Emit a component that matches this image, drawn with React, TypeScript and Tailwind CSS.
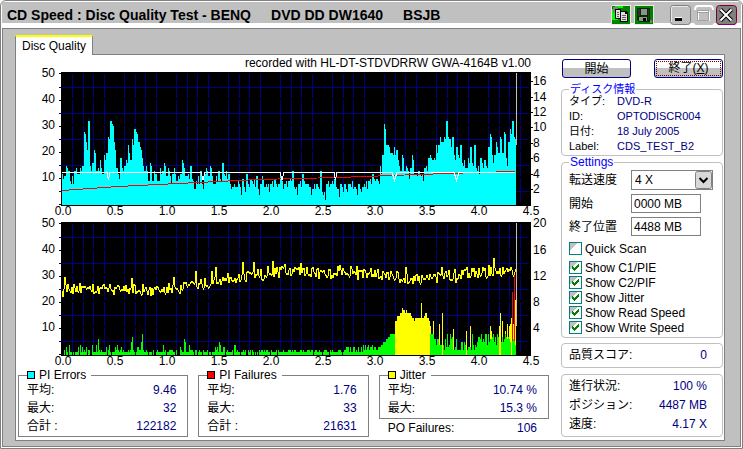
import { useId, useState, type ReactNode } from "react";

const PIE = [
  12, 11, 15, 13, 9, 11, 13, 14, 12, 14, 15, 28, 24, 32, 15, 16, 21, 13, 14, 17,
  12, 19, 20, 26, 32, 31, 24, 14, 12, 18, 14, 15, 17, 23, 17, 25, 29, 28, 24, 22,
  18, 13, 15, 9, 16, 9, 13, 12, 9, 14, 13, 16, 11, 14, 11, 12, 14, 9, 11, 12, 17,
  14, 11, 12, 15, 10, 6, 9, 11, 13, 8, 12, 14, 11, 15, 11, 8, 11, 13, 10, 16, 12,
  13, 12, 8, 7, 8, 7, 9, 7, 10, 7, 12, 8, 10, 9, 10, 11, 6, 8, 11, 7, 8, 8, 8, 9,
  10, 8, 8, 11, 9, 8, 9, 9, 10, 13, 7, 7, 8, 9, 12, 9, 8, 8, 7, 6, 8, 8, 7, 13, 5,
  5, 8, 9, 8, 9, 10, 7, 6, 8, 7, 8, 6, 8, 8, 9, 7, 6, 8, 6, 7, 8, 9, 9, 10, 12, 10,
  10, 9, 15, 19, 31, 23, 23, 20, 20, 22, 21, 17, 13, 19, 13, 15, 13, 14, 19, 12,
  12, 13, 12, 12, 14, 15, 18, 19, 17, 18, 23, 23, 26, 24, 26, 32, 26, 25, 26, 19,
  22, 19, 23, 16, 17, 14, 18, 22, 16, 23, 14, 15, 18, 16, 17, 15, 22, 27, 19, 19,
  24, 20, 26, 20, 28, 18, 24, 29, 32, 26,
];

const PIF_SPIKES: Record<number, number> = {
  36: 6, 69: 5, 70: 7, 79: 5, 80: 8, 122: 6, 123: 5, 157: 5,
};

// x, level
const JITTER_LEVELS = [
  [0, 25], [90, 24.5], [115, 25], [135, 27], [160, 28], [190, 30], [228, 32],
  [265, 30.5], [280, 32], [310, 30.5], [345, 29], [360, 29], [400, 31], [454, 31.5],
];

const BLOCK_START = 333;
const YELLOW_BLOCK = [
  13, 13, 15, 15, 15, 16, 16, 18, 17, 17, 16, 17, 16, 16, 16, 16, 15, 14, 14, 13,
  14, 14, 14, 14, 14, 14, 20, 14, 14, 15, 16, 16, 14, 14, 13,
];

const YELLOW_SPIKES: Record<number, number> = {
  368: 11, 371: 13, 377: 12, 380: 16, 391: 10, 404: 9, 408: 11, 428: 11, 429: 9,
  437: 11, 438: 16, 440: 13, 443: 9, 445: 12, 447: 11, 448: 12, 449: 14, 450: 12,
  451: 12, 453: 21,
};

// spikes that reach down to the axis
const FULL_SPIKES = [380, 404, 437, 438, 449];

function createRandom(seed: number) {
  let s = seed;
  return () => {
    s = (s * 16807) % 2147483647;
    return s / 2147483647;
  };
}

function interpolate(points: number[][], x: number) {
  for (let i = 1; i < points.length; i++) {
    if (x <= points[i][0]) {
      const [x0, y0] = points[i - 1];
      const [x1, y1] = points[i];
      return y0 + ((y1 - y0) * (x - x0)) / (x1 - x0);
    }
  }
  return points[points.length - 1][1];
}

const LEFT = 44;
const BOTTOM = 134;
const END = 454;

function bar(x: number, value: number) {
  const h = Math.round(value * 2.62);
  return `M${LEFT + x} ${BOTTOM + 1}v${-h}h1v${h}z`;
}

function buildPie() {
  const drops = [0, 2, 1, 0, 3, 1, 0];
  let d = "";
  for (let x = 0; x < END; x++) {
    const v = PIE[Math.min(x >> 1, PIE.length - 1)];
    d += bar(x, x % 2 ? v - drops[x % 7] : v);
  }
  return d;
}

function buildPif() {
  const rnd = createRandom(1171);
  let green = "";
  let yellow = "";
  for (let x = 0; x < END; x++) {
    const r = rnd();
    let v = r < 0.15 ? 0 : r < 0.62 ? 1 : r < 0.86 ? 2 : r < 0.93 ? 3 : 4;
    if (x > 175 && x < 280) v = Math.min(v, 2);
    if (x > 280) v = 1 + Math.floor(r * 3);
    if (x > 300) v = 2 + Math.floor(r * 3);
    if (x > 316) v = 3 + Math.floor((x - 316) / 2.5);
    if (x > 327) v = 8;
    if (x > 371) v = 4 + Math.floor(r * 3);
    if (x > 380) v = 2 + Math.floor(r * r * 7);
    if (x > 415) v = 4 + Math.floor(r * 5);

    const inBlock = x >= BLOCK_START && x < BLOCK_START + YELLOW_BLOCK.length;
    if (inBlock) {
      yellow += bar(x, YELLOW_BLOCK[x - BLOCK_START]);
    } else if (!FULL_SPIKES.includes(x)) {
      green += bar(x, PIF_SPIKES[x] ?? v);
    }
    if (YELLOW_SPIKES[x]) yellow += bar(x, YELLOW_SPIKES[x]);
  }
  return { green, yellow };
}

function buildJitter() {
  const rnd = createRandom(533);
  let d = "";
  let last = BOTTOM - 24 * 2.62;
  for (let x = 0; x < END; x++) {
    const r = rnd();
    let v = interpolate(JITTER_LEVELS, x) + (rnd() - 0.5) * 4.6;
    if (r > 0.95) v += 3.5;
    if (r < 0.05) v -= 1.5;
    const y = Math.round(BOTTOM - v * 2.62);
    const top = Math.round(Math.min(y, last));
    const h = Math.max(2, Math.round(Math.abs(y - last)));
    d += `M${LEFT + x} ${top}h1v${h}h-1z`;
    last = y;
  }
  return d;
}

const pieBars = buildPie();
const pifBars = buildPif();
const jitterLine = buildJitter();

function Plot(props: {
  label: string;
  rightLabels: [string, number][];
  rightTicks?: boolean;
  children: ReactNode;
}) {
  const { label, rightLabels, rightTicks, children } = props;
  const tenths = Array.from(Array(46).keys()).filter((n) => n % 5 !== 0);

  return (
    <svg
      viewBox="0 0 531 148"
      role="img"
      aria-label={label}
      className="block w-full overflow-visible font-['Liberation_Sans',sans-serif] text-[12px]"
    >
      <rect x="43" y="2" width="470" height="134" fill="#000" />
      <g stroke="#000080" shapeRendering="crispEdges">
        {tenths.map((n) => (
          <path
            key={n}
            d={`M${LEFT + Math.round(n * 10.4) + 0.5} 4V${BOTTOM}`}
            strokeDasharray="24 2"
          />
        ))}
        {[17, 43, 69, 95, 121].map((y) => (
          <path key={y} d={`M41 ${y + 0.5}H511`} />
        ))}
      </g>
      <g shapeRendering="crispEdges">{children}</g>
      <g stroke="#000" shapeRendering="crispEdges">
        {[3, 30, 56, 82, 108, 134].map((y) => (
          <path key={y} d={`M41 ${y + 0.5}H43`} />
        ))}
        {rightTicks &&
          rightLabels.map(([text, y]) => (
            <path key={text} d={`M513 ${y + 0.5}H515`} />
          ))}
      </g>
      {[50, 40, 30, 20, 10].map((n, i) => (
        <text key={n} x="37" y={7 + i * 26} textAnchor="end">
          {n}
        </text>
      ))}
      {Array.from(Array(10).keys()).map((n) => (
        <text key={n} x={45 + n * 52} y="145" textAnchor="middle">
          {(n / 2).toFixed(1)}
        </text>
      ))}
      {rightLabels.map(([text, y]) => (
        <text key={text} x="515" y={y + 4}>
          {text}
        </text>
      ))}
    </svg>
  );
}

function StatBox(props: {
  title: string;
  swatch: string;
  rows: [string, string][];
}) {
  return (
    <fieldset className="min-w-0 border border-[#808080] pr-[11px] pb-px pl-[8px]">
      <legend className="flex items-center gap-[4px] pr-[5px] leading-[12px]">
        <span className={`size-[8px] border border-black ${props.swatch}`} />
        {props.title}
      </legend>
      <dl>
        {props.rows.map(([name, value]) => (
          <div key={name} className="flex justify-between leading-[18px]">
            <dt>{name}</dt>
            <dd className="text-[#000080]">{value}</dd>
          </div>
        ))}
      </dl>
    </fieldset>
  );
}

function Check(props: { label: string; initial?: boolean }) {
  const [checked, setChecked] = useState(!!props.initial);

  return (
    <label className="flex h-[15px] items-center gap-[3px]">
      <span className="relative size-[13px]">
        <input
          type="checkbox"
          checked={checked}
          onChange={(e) => setChecked(e.target.checked)}
          className="block size-[13px] appearance-none border border-[#008080] bg-[linear-gradient(135deg,#c0c0c0_35%,#fff_35%)]"
        />
        {checked && (
          <svg
            viewBox="0 0 13 13"
            className="pointer-events-none absolute inset-0"
            shapeRendering="crispEdges"
          >
            <path
              d="M3 5h1v1h1v1h1V6h1V5h1V4h1V3h1v3H9v1H8v1H7v1H6v1H5V9H4V8H3z"
              fill="#008000"
            />
          </svg>
        )}
      </span>
      {props.label}
    </label>
  );
}

function ReadoutRows(props: { rows: [string, string][] }) {
  return (
    <dl>
      {props.rows.map(([name, value]) => (
        <div key={name} className="flex justify-between leading-[19px]">
          <dt>{name}</dt>
          <dd className="text-[#000080]">{value}</dd>
        </div>
      ))}
    </dl>
  );
}

function TitleBar() {
  return (
    <header className="flex h-[26px] items-start justify-between border-b-[5px] border-white bg-[#c0c0c0] pr-[4px] pl-[5px]">
      <h1 className="flex gap-[20px] text-[14px] leading-[26px] font-bold whitespace-nowrap">
        <span>CD Speed : Disc Quality Test - BENQ</span>
        <span>DVD DD DW1640</span>
        <span>BSJB</span>
      </h1>
      <div className="flex pt-[3px]">
        <button aria-label="Copy" className="mr-[3px] size-[20px]">
          <svg viewBox="0 0 20 20" shapeRendering="crispEdges">
            <rect width="20" height="20" rx="2" fill="#e8e8e8" />
            <path d="M1 1h18v18H1z" fill="#008000" />
            <path d="M1 4l3-3h8v2H4v9h3v3H1z" fill="#00ff00" />
            <path d="M2 2h5v2H4v4H2z" fill="#808080" />
            <path d="M4 4h6v10H4z" fill="#000" />
            <path d="M5 5h4v8H5z" fill="#e0e0e0" />
            <path d="M9 6h6l2 2v9H9z" fill="#000" />
            <path d="M10 7h4v2h2v7h-6z" fill="#e0e0e0" />
            <path d="M6 7.500h2M6 9.500h2M6 11.500h2M11 10.500h4M11 12.500h4M11 14.500h4" stroke="#606060" />
          </svg>
        </button>
        <button aria-label="Save" className="mr-[16px] size-[20px]">
          <svg viewBox="0 0 20 20" shapeRendering="crispEdges">
            <rect width="20" height="20" rx="2" fill="#e8e8e8" />
            <path d="M1 1h18v18H1z" fill="#008000" />
            <path d="M3 3h13v14H5l-2-2z" fill="#003000" />
            <path d="M4 4h2v7H4zM14 4h1v11h-1z" fill="#303030" />
            <path d="M7 4h6v6H7z" fill="#909090" />
            <path d="M5 12h8v4H5z" fill="#909090" />
            <path d="M9 13h3v3H9z" fill="#000" />
            <path d="M16 15h2v3h-2z" fill="#808080" />
          </svg>
        </button>
        <button aria-label="Minimize" className="mr-[3px] size-[21px]">
          <svg viewBox="0 0 21 21">
            <rect x=".5" y=".5" width="20" height="19" rx="3" fill="#c0c0c0" stroke="#808080" />
            <path d="M1.500 17V3q0-1.500 1.500-1.500h15" fill="none" stroke="#e8e8e8" />
            <path d="M5 12.500h7" stroke="#fff" />
            <path d="M5 14.500h7" stroke="#000" strokeWidth="3" />
          </svg>
        </button>
        <button aria-label="Maximize" disabled className="mr-[2px] size-[20px]">
          <svg viewBox="0 0 20 20">
            <rect width="20" height="20" rx="3" fill="#c0c0c0" />
            <path d="M1 5q0-4 3-4h12q3 0 3 4" fill="none" stroke="#fff" strokeWidth="2" />
            <path d="M4.500 6.500h11v9h-11z" fill="none" stroke="#fff" />
            <path d="M3.500 5.500h11v10h-11zM3.500 7.500h11" fill="none" stroke="#a0a0a0" />
          </svg>
        </button>
        <button aria-label="Close" className="size-[21px]">
          <svg viewBox="0 0 21 21">
            <rect x=".5" y=".5" width="20" height="19" rx="3" fill="#808080" stroke="#800020" />
            <path d="M2 19.500h17" stroke="#800080" />
            <path d="M4.500 4.500l11 11M15.500 4.500l-11 11" stroke="#000" strokeWidth="4" />
            <path d="M4.500 4.500l11 11M15.500 4.500l-11 11" stroke="#fff" strokeWidth="2" />
          </svg>
        </button>
      </div>
    </header>
  );
}

const group = "min-w-0 rounded-[4px] border border-[#c0c0c0] pl-[7px]";
const pushButton =
  "h-[19px] w-[69px] rounded-[3px] border border-[#000080] bg-[linear-gradient(#fff_50%,#c0c0c0_50%)] leading-[16px]";

function SidePanel() {
  const [speed, setSpeed] = useState("4 X");
  const [start, setStart] = useState("0000 MB");
  const [end, setEnd] = useState("4488 MB");
  const id = useId();

  return (
    <aside className="flex w-[162px] shrink-0 flex-col pt-[4px]">
      <div className="flex justify-between pl-px">
        <button className={pushButton}>開始</button>
        <button className={`${pushButton} p-px`}>
          <span className="block h-full border border-dotted border-[#800000] leading-[13px]">
            終了(<u>X</u>)
          </span>
        </button>
      </div>

      <fieldset className={`${group} mt-[6px] pb-px`}>
        <legend className="h-[10px] px-px text-[11px] leading-[10px] text-[#0000ff]">
          ディスク情報
        </legend>
        <dl className="text-[11px] leading-[15px]">
          {[
            ["タイプ:", "DVD-R"],
            ["ID:", "OPTODISCR004"],
            ["日付:", "18 July 2005"],
            ["Label:", "CDS_TEST_B2"],
          ].map(([name, value]) => (
            <div key={name} className="flex">
              <dt className="w-[48px]">{name}</dt>
              <dd className="text-[#000080]">{value}</dd>
            </div>
          ))}
        </dl>
      </fieldset>

      <fieldset className={`${group} mt-px pt-[3px] pb-[2px]`}>
        <legend className="h-[10px] px-px leading-[10px] text-[#0000ff]">
          Settings
        </legend>
        <div className="grid grid-cols-[62px_1fr] items-center gap-y-[4px]">
          <label htmlFor={`${id}-speed`}>転送速度</label>
          <span className="relative w-[82px]">
            <select
              id={`${id}-speed`}
              value={speed}
              onChange={(e) => setSpeed(e.target.value)}
              className="block h-[20px] w-full appearance-none border border-[#808080] bg-white pl-[3px]"
            >
              <option>4 X</option>
              <option>8 X</option>
            </select>
            <svg
              viewBox="0 0 17 18"
              className="pointer-events-none absolute top-px right-px h-[18px] w-[17px]"
            >
              <rect x=".5" y=".5" width="16" height="17" rx="2" fill="#d8d8d8" stroke="#808080" />
              <path d="M4.500 7l4 4 4-4" fill="none" stroke="#000" strokeWidth="2" />
            </svg>
          </span>
          <label htmlFor={`${id}-start`}>開始</label>
          <input
            id={`${id}-start`}
            value={start}
            onChange={(e) => setStart(e.target.value)}
            className="h-[19px] w-[70px] border border-[#808080] pl-[2px]"
          />
          <label htmlFor={`${id}-end`}>終了位置</label>
          <input
            id={`${id}-end`}
            value={end}
            onChange={(e) => setEnd(e.target.value)}
            className="h-[19px] w-[70px] border border-[#808080] pl-[2px]"
          />
        </div>
        <div className="pt-[5px]">
          <Check label="Quick Scan" />
          <div className="mt-[4px]">
            <Check label="Show C1/PIE" initial />
            <Check label="Show C2/PIF" initial />
            <Check label="Show Jitter" initial />
            <Check label="Show Read Speed" initial />
            <Check label="Show Write Speed" initial />
          </div>
        </div>
      </fieldset>

      <section className={`${group} mt-[5px] py-[2px] pr-[15px]`}>
        <ReadoutRows rows={[["品質スコア:", "0"]]} />
      </section>
      <section className={`${group} mt-[6px] py-[2px] pr-[15px]`}>
        <ReadoutRows
          rows={[
            ["進行状況:", "100 %"],
            ["ポジション:", "4487 MB"],
            ["速度:", "4.17 X"],
          ]}
        />
      </section>
    </aside>
  );
}

export default function App() {
  return (
    <div className="flex min-h-screen flex-col rounded-t-[6px] border border-[#808080] bg-white p-px font-['Liberation_Sans','Noto_Sans_CJK_JP',sans-serif] text-[12px] text-black">
      <TitleBar />
      <main className="flex grow flex-col border border-[#808080] bg-[#c0c0c0] pt-[6px] pr-[15px] pb-[5px] pl-[12px]">
        <div role="tablist" className="flex">
          <button
            role="tab"
            aria-selected="true"
            className="relative z-10 -mb-px h-[20px] w-[78px] border-x border-t-2 border-x-[#808080] border-t-[#ffff00] bg-white text-[12px] leading-[17px] whitespace-nowrap"
          >
            Disc Quality
          </button>
        </div>
        <div className="flex grow gap-[12px] border border-[#808080] bg-white pr-px pb-[2px] pl-[2px]">
          <div className="min-w-0 grow">
            <p className="pt-px pr-[18px] text-right leading-[14px]">
              recorded with HL-DT-STDVDRRW GWA-4164B v1.00
            </p>
            <div className="flex flex-col gap-[2px]">
              <Plot
                label="PI Errors"
                rightTicks
                rightLabels={[
                  ["16", 11],
                  ["14", 27],
                  ["12", 42],
                  ["10", 57],
                  ["8", 73],
                  ["6", 88],
                  ["4", 104],
                  ["2", 119],
                ]}
              >
                <path d={pieBars} fill="#00ffff" />
                <path
                  d="M44 120.500L100 116.500L160 113.500L240 109.500L320 107.500L400 104.500L460 102.500L497 101.500"
                  fill="none"
                  stroke="#f00"
                />
                <path
                  d="M44 102.500H89L90.500 110L92 102.500H183L185 110L187 102.500H262L264 110L266 102.500H316L317.500 110L319 102.500H374L376.500 110L379 102.500H436L438.500 110L441 102.500H497"
                  fill="none"
                  stroke="#fff"
                />
                <path d="M498.500 3V75" stroke="#c0c0c0" />
              </Plot>
              <Plot
                label="PI Failures and jitter"
                rightLabels={[
                  ["20", 3],
                  ["16", 30],
                  ["12", 56],
                  ["8", 82],
                  ["4", 108],
                ]}
              >
                <path d={pifBars.yellow} fill="#ff0" />
                <path d={pifBars.green} fill="#0f0" />
                <path d={jitterLine} fill="#ff0" />
                <path d="M494.500 121V72M496.500 121V55" stroke="#f00" />
                <path d="M498.500 3V106" stroke="#c0c0c0" />
              </Plot>
            </div>
            <div className="mt-px grid grid-cols-3 gap-x-[10px]">
              <StatBox
                title="PI Errors"
                swatch="bg-[#00ffff]"
                rows={[
                  ["平均:", "9.46"],
                  ["最大:", "32"],
                  ["合計 :", "122182"],
                ]}
              />
              <StatBox
                title="PI Failures"
                swatch="bg-[#ff0000]"
                rows={[
                  ["平均:", "1.76"],
                  ["最大:", "33"],
                  ["合計 :", "21631"],
                ]}
              />
              <div>
                <StatBox
                  title="Jitter"
                  swatch="bg-[#ffff00]"
                  rows={[
                    ["平均:", "10.74 %"],
                    ["最大:", "15.3 %"],
                  ]}
                />
                <p className="flex justify-between pr-[12px] pl-[9px] leading-[18px]">
                  <span>PO Failures:</span>
                  <span className="text-[#000080]">106</span>
                </p>
              </div>
            </div>
          </div>
          <SidePanel />
        </div>
      </main>
    </div>
  );
}
